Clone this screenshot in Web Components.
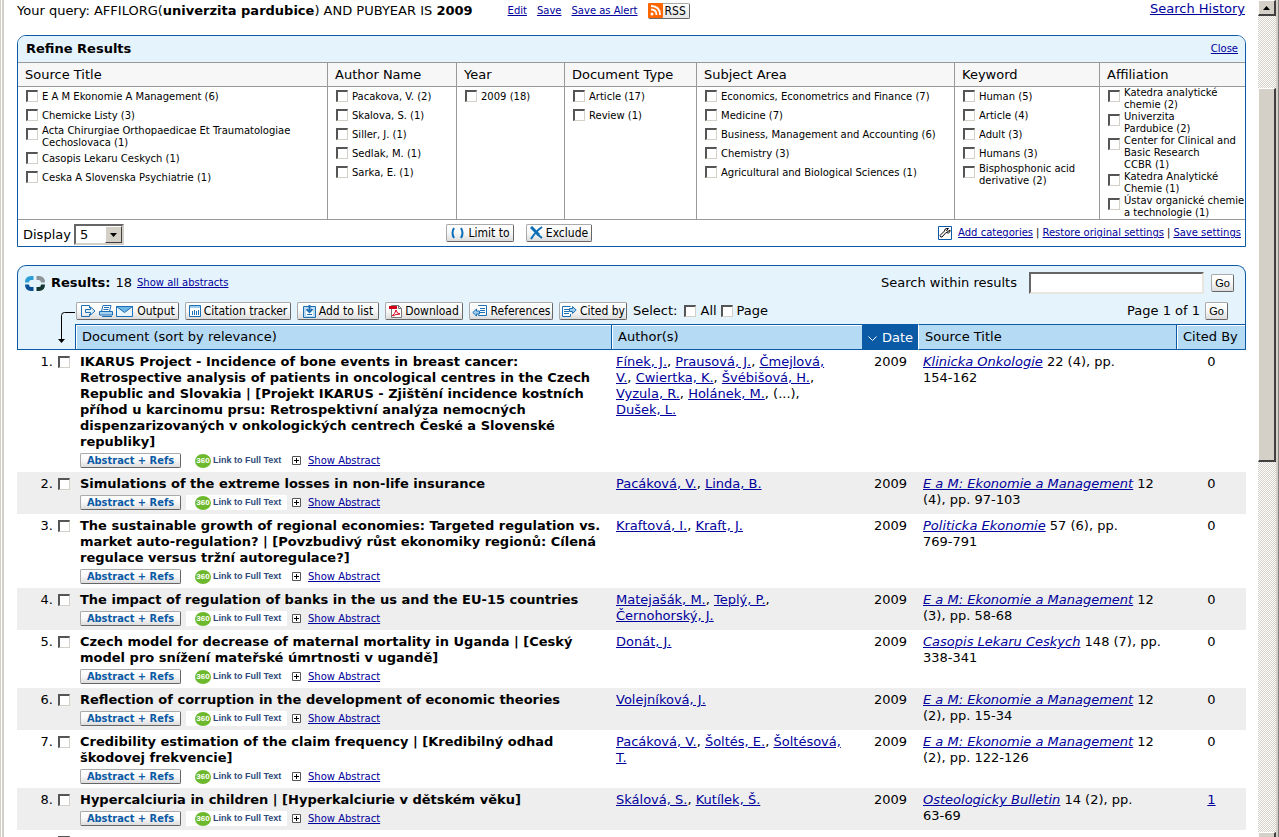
<!DOCTYPE html>
<html lang="en">
<head>
<meta charset="utf-8">
<title>Search results</title>
<style>
html, body { margin: 0; height: 100%; }
body { font: 13px/16px "DejaVu Sans", Verdana, sans-serif; color: #000; background: #fff; overflow: hidden; }
</style>
</head>
<body>
<app-window>
  <query-bar></query-bar>
  <refine-panel></refine-panel>
  <results-panel></results-panel>
</app-window>
<script>
const BASE = `
:host{display:block}
:host([hidden]){display:none}
*{box-sizing:border-box}
a{color:#00009c;text-decoration:underline}
.s{font-size:10px;line-height:12px}
input[type=checkbox]{appearance:none;margin:0;width:12px;height:12px;flex:none;background:#fff;border:2px solid;border-color:#555 #d4d0c8 #d4d0c8 #555;border-right-width:1px;border-bottom-width:1px;border-radius:0;display:block}
input[type=checkbox]:checked{background:#0a5aa5}
`;
function define(name, html, init) {
  const t = document.createElement('template');
  t.innerHTML = html;
  customElements.define(name, class extends HTMLElement {
    constructor() {
      super();
      this.attachShadow({ mode: 'open' }).append(t.content.cloneNode(true));
    }
    connectedCallback() { if (init && !this.ready) { this.ready = true; init(this, this.shadowRoot); } }
  });
}

const ICONS = {
  limit: `<svg width="15" height="14" viewBox="0 0 15 14" fill="none" stroke="#0a6db5" stroke-width="2"><path d="M4 2Q1 7 4 12M11 2q3 5 0 10"/></svg>`,
  exclude: `<svg width="13" height="14" viewBox="0 0 13 14" fill="none" stroke="#0a6db5"><path stroke-width="3" d="M1 1l8 8"/><path stroke-width="2" d="M7 8l5 4M12 1Q6 5 1 13"/></svg>`,
  output: `<svg width="54" height="14" viewBox="0 0 54 14" fill="none" stroke="#1f6fb5"><path d="M9.500 4V1.500H1.500v11H9.500V10" /><path fill="#dff0fb" d="M5.500 5.500h5v-2.500l4.500 4-4.500 4V8.500h-5z"/><path fill="#fff" d="M21.500 7.500l1.500-6h8l-1.500 6z"/><path fill="#a8d3f0" d="M19.500 7.500h13v3.500h-13z"/><path d="M22 12.500h10M24 3.500h5M23.500 5.500h5"/><path fill="#e8f5fd" d="M36.500 2.500h16v10h-16z"/><path fill="#6fb7e6" d="M36.500 2.500h16l-8 6z"/></svg>`,
  citation: `<svg width="12" height="12" viewBox="0 0 12 12" fill="none"><path fill="#fff" stroke="#1f6fb5" d="M.5.5h11v11H.5z"/><path fill="#9fcdec" d="M1 1h10v2H1z"/><path stroke="#1f6fb5" d="M3.500 6v4M5.500 5v5M7.500 6v4M9.500 5v5"/></svg>`,
  list: `<svg width="13" height="13" viewBox="0 0 13 13" fill="none" stroke="#1f6fb5"><path fill="#b9dcf3" d="M.5 1.500h12v11H.5z"/><path fill="#fff" stroke="none" d="M3 3h7v8H3z"/><path stroke-width="2" d="M6.500 0v6"/><path stroke-width="2" d="M3.500 4l3 3 3-3"/><path d="M4 9.500h5"/></svg>`,
  pdf: `<svg width="13" height="13" viewBox="0 0 13 13" fill="none"><path fill="#fff" stroke="#777" d="M2.500.5h7l3 3v9h-10z"/><path stroke="#777" d="M9.500.5v3h3"/><path fill="#d4001a" d="M0 1h8v3H0z"/><path stroke="#d4001a" d="M3 11q3-2 4-6 1 4 4 4-5 0-7 2"/></svg>`,
  refs: `<svg width="16" height="12" viewBox="0 0 16 12" fill="none" stroke="#1f6fb5"><path fill="#fff" d="M6.500 1V.5h8v10h-8v-1"/><path d="M8 3.500h5M8 5.500h5M8 7.500h5"/><path fill="#9fcdec" d="M7.500 6H4.500V4L.8 7.500l3.700 3.500V9h3z"/></svg>`,
  cited: `<svg width="16" height="13" viewBox="0 0 16 13" fill="none" stroke="#1f6fb5"><path fill="#fff" d="M9.500 9v2.500h-8V1.500h8"/><path d="M3 4.500h5M3 6.500h5M3 8.500h5"/><path fill="#9fcdec" d="M8.500 3.500h3v-2l3.700 3.500-3.700 3.500v-2h-3z"/></svg>`
};

define('app-window', `<style>${BASE}
:host{display:grid;grid-template-columns:4px minmax(0,1fr) 21px;height:100vh;overflow:hidden}
.edge{background:linear-gradient(90deg,#d4d0c8 1px,#fff 1px 2px,#d4d0c8 2px)}
main{padding:0 12px 0 13px;min-width:0;overflow:hidden}
</style><div class="edge"></div><main><slot></slot></main><scroll-rail></scroll-rail>`);

define('scroll-rail', `<style>${BASE}
:host{display:grid;grid-template-columns:18px 2px 1px;height:100vh;background:repeating-conic-gradient(#d4d0c8 0 25%,#fff 0 50%) 0 0/2px 2px}
.rail{display:flex;flex-direction:column;min-height:0}
.lite{background:#d4d0c8}.dark{background:#808080}
.b,.t{background:#d4d0c8;border:1px solid;border-color:#fff #404040 #404040 #fff;border-right-width:2px;border-bottom-width:2px}
.b{flex:none;height:16px;display:flex;align-items:center;justify-content:center}
.down{height:5px;border-bottom:0}
.t{flex:373 1 0}.g1{flex:72 1 0}.g2{flex:372 1 0}
</style><div class="rail"><div class="b"><svg width="7" height="4"><path d="M0 4L3.500 0 7 4z"/></svg></div><div class="g1"></div><div class="t"></div><div class="g2"></div><div class="b down"></div></div><div class="lite"></div><div class="dark"></div>`);

define('tool-button', `<style>${BASE}
:host{display:inline-block}
button{display:flex;align-items:center;justify-content:center;gap:3px;width:100%;height:18px;padding:0 2px;margin:0;font:12px/14px "DejaVu Sans Condensed","DejaVu Sans",sans-serif;color:#000;white-space:nowrap;
 background:linear-gradient(#fff,#f8f8f8 50%,#dcdcdc);border:1px solid;border-color:#aaa #666 #666 #aaa;border-radius:2px}
:host([kind=abs]) button{height:15px;padding:0;font-weight:bold;font-size:11px;line-height:13px;color:#0a5aa5}
:host([kind=go]) button{padding:0;font:11px/14px "Liberation Sans",sans-serif}
svg{display:block;flex:none}
</style><button type="button"><span id="i" hidden></span><slot></slot></button>`, (el, r) => {
  const i = el.getAttribute('icon');
  if (i) { const s = r.getElementById('i'); s.hidden = false; s.innerHTML = ICONS[i]; }
});

define('query-bar', `<style>${BASE}
:host{display:flex;align-items:flex-start;justify-content:space-between;height:34px;padding:1px 1px 0 0;white-space:nowrap}
.q{display:flex;align-items:center;gap:10px;height:19px}
.q>span{margin-right:25px}
.rss{display:flex;height:16px;padding:0;border:1px solid;border-color:#aaa #666 #666 #aaa;border-radius:2px;background:linear-gradient(#fff,#e4e4e4);font:12px/14px "DejaVu Sans Condensed","DejaVu Sans",sans-serif;color:#000}
.rss svg{margin:-1px 2px 0 -1px}.rss span{padding-right:3px}
</style>
<div class="q"><span>Your query: AFFILORG(<b>univerzita pardubice</b>) AND PUBYEAR IS <b>2009</b></span>
<a class="s" href="#">Edit</a><a class="s" href="#">Save</a><a class="s" href="#">Save as Alert</a>
<button class="rss" type="button"><svg width="15" height="15" viewBox="0 0 15 15"><rect width="15" height="15" rx="1" fill="#f60"/><circle cx="4" cy="11" r="1.500" fill="#fff"/><path d="M3 6.500Q8.500 6.500 8.500 12M3 3Q12 3 12 12" fill="none" stroke="#fff" stroke-width="1.800"/></svg><span>RSS</span></button></div>
<a href="#">Search History</a>`);

define('facet-column', `<style>${BASE}
:host{display:flex;flex-direction:column;min-width:0;border-right:1px solid #999}
:host(:last-child){border-right:0}
h3{margin:0;font:13px/23px "DejaVu Sans",sans-serif;height:24px;padding-left:7px;background:#f7f7f7;border-bottom:1px solid #999;white-space:nowrap}
ul{list-style:none;margin:0;padding:0 0 0 8px;height:132px}
label{display:flex;align-items:flex-start;gap:4px;min-height:19px;white-space:nowrap}
label input{margin-top:3px!important}
label span{align-self:center}
</style><h3></h3><ul></ul>`, (el, r) => {
  r.querySelector('h3').textContent = el.getAttribute('heading');
  r.querySelector('ul').innerHTML = el.getAttribute('items').split(';').map(t =>
    `<li><label class="s"><input type="checkbox"><span>${t.replaceAll('/', '<br>')}</span></label></li>`).join('');
});

define('refine-panel', `<style>${BASE}
:host{border:1px solid #0a5aa5;border-radius:9px 9px 0 0;overflow:hidden;margin-bottom:18px}
header{display:flex;justify-content:space-between;align-items:center;height:27px;padding:0 7px 0 8px;background:#e5f3fd;border-bottom:1px solid #999}
h2{margin:0;font-size:13px;line-height:16px}
.cols{display:grid;grid-template-columns:310fr 129fr 108fr 132fr 258fr 145fr 145fr;border-bottom:1px solid #999}
footer{display:grid;grid-template-columns:428fr 489fr 310fr;align-items:center;height:26px}
.d{display:flex;gap:3px;padding-left:5px;align-items:center}
.d label{padding-top:4px}
.sel{position:relative;display:flex}
select{appearance:none;width:50px;height:21px;margin:3px 0 0;padding:0 0 0 4px;font:13px/16px "DejaVu Sans",sans-serif;color:#000;background:#fff;border:2px solid;border-color:#666 #d4d0c8 #d4d0c8 #666;border-radius:0}
.arr{position:absolute;right:2px;top:5px;width:17px;height:17px;pointer-events:none;background:#d4d0c8;border:1px solid;border-color:#fff #404040 #404040 #fff;display:flex;align-items:center;justify-content:center}
.b{display:flex;gap:12px}
.l{display:flex;justify-content:flex-end;align-items:center;gap:3px;padding-right:4px;white-space:nowrap}
.l svg{margin-right:3px}
.lim{width:68px}.exc{width:66px}
</style>
<header><h2>Refine Results</h2><a class="s" href="#">Close</a></header>
<div class="cols">
<facet-column heading="Source Title" items="E A M Ekonomie A Management (6);Chemicke Listy (3);Acta Chirurgiae Orthopaedicae Et Traumatologiae/Cechoslovaca (1);Casopis Lekaru Ceskych (1);Ceska A Slovenska Psychiatrie (1)"></facet-column>
<facet-column heading="Author Name" items="Pacakova, V. (2);Skalova, S. (1);Siller, J. (1);Sedlak, M. (1);Sarka, E. (1)"></facet-column>
<facet-column heading="Year" items="2009 (18)"></facet-column>
<facet-column heading="Document Type" items="Article (17);Review (1)"></facet-column>
<facet-column heading="Subject Area" items="Economics, Econometrics and Finance (7);Medicine (7);Business, Management and Accounting (6);Chemistry (3);Agricultural and Biological Sciences (1)"></facet-column>
<facet-column heading="Keyword" items="Human (5);Article (4);Adult (3);Humans (3);Bisphosphonic acid/derivative (2)"></facet-column>
<facet-column heading="Affiliation" items="Katedra analytické/chemie (2);Univerzita/Pardubice (2);Center for Clinical and/Basic Research/CCBR (1);Katedra Analytické/Chemie (1);Ústav organické chemie/a technologie (1)"></facet-column>
</div>
<footer>
<div class="d"><label for="n">Display</label><span class="sel"><select id="n"><option>5</option><option>10</option></select><span class="arr"><svg width="7" height="4"><path d="M0 0h7L3.500 4z"/></svg></span></span></div>
<div class="b"><tool-button class="lim" icon="limit">Limit to</tool-button><tool-button class="exc" icon="exclude">Exclude</tool-button></div>
<div class="l s"><svg width="14" height="14" viewBox="0 0 14 14"><path fill="#fff" stroke="#0a5aa5" d="M.5.5h13v13H.5z"/><g fill="none" stroke="#000"><path d="M8 6.500L4 11q-1.500.5-2-1.500L6.500 5"/><path d="M6.500 5Q6.500 2.500 9 2.500M8 6.500l2.500.5q2-1 1.500-3L10 5.500 8.500 4.500 10.500 2.500H9"/></g></svg><a href="#">Add categories</a>|<a href="#">Restore original settings</a>|<a href="#">Save settings</a></div>
</footer>`);

define('results-panel', `<style>${BASE}
.head{position:relative;border:1px solid #0a5aa5;border-bottom:0;border-radius:9px 9px 0 0;background:#e5f3fd;height:59px;white-space:nowrap}
.r{display:flex;align-items:center;justify-content:space-between}
.r1{padding:6px 11px 0 7px}
.r2{padding:8px 17px 0 58px}
.g{display:flex;align-items:center}
.g1{gap:5px}.g1 svg{margin-right:1px}
.g2{gap:6px}
.sl{gap:4px}
.sl span{margin-right:3px}
.search{gap:7px}
.search label{margin-right:5px}
input[type=text]{width:175px;height:22px;margin:0;padding:0 3px;font:13px "DejaVu Sans",sans-serif;background:#fff;border:2px solid;border-color:#666 #e8e6e0 #e8e6e0 #666;border-radius:0}
.pg{gap:5px}
.go{width:23px}
.arrow{position:absolute;left:39px;top:45px;z-index:1}
.w1{width:103px}.w2{width:106px}.w3{width:82px}.w4{width:78px}.w5{width:84px}.w6{width:68px}
</style>
<div class="head">
<div class="r r1"><div class="g g1"><svg width="20" height="15" viewBox="0 0 20 15" fill="none" stroke-width="4"><path stroke="#2e9fd4" d="M8.500 2H6Q2 2 2 6.500"/><path stroke="#8b9499" d="M11.500 2H14q4 0 4 4.500"/><path stroke="#0a4f96" d="M2 8.500Q2 13 6 13h2.500"/><path stroke="#12352f" d="M18 8.500Q18 13 14 13h-2.500"/></svg><b>Results:</b><span>18</span><a class="s" href="#">Show all abstracts</a></div>
<div class="g search"><label for="q">Search within results</label><input type="text" id="q"><tool-button class="go" kind="go">Go</tool-button></div></div>
<div class="r r2"><div class="g g2"><tool-button class="w1" icon="output">Output</tool-button><tool-button class="w2" icon="citation">Citation tracker</tool-button><tool-button class="w3" icon="list">Add to list</tool-button><tool-button class="w4" icon="pdf">Download</tool-button><tool-button class="w5" icon="refs">References</tool-button><tool-button class="w6" icon="cited">Cited by</tool-button>
<div class="g sl"><span>Select:</span><input type="checkbox" id="all"><label for="all">All</label><input type="checkbox" id="page"><label for="page">Page</label></div></div>
<div class="g pg"><span>Page 1 of 1</span><tool-button class="go" kind="go">Go</tool-button></div></div>
<svg class="arrow" width="20" height="33" viewBox="0 0 20 33"><path fill="none" stroke="#000" d="M18 1.500H7.500q-3 0-3 3V29"/><path d="M1 28h7l-3.500 4z"/></svg>
</div>
<results-table></results-table>`);

define('full-text-link', `<style>${BASE}
:host{display:inline-block}
a{display:flex;align-items:center;gap:2px;width:101px;height:15px;padding-left:9px;background:#fff;text-decoration:none;color:#2f4a7a;font:bold 9px/15px "Liberation Sans",sans-serif;white-space:nowrap}
i{display:block;width:16px;height:14px;border-radius:50%;background:#6cb92d;color:#fff;font:bold 8px/14px "Liberation Sans",sans-serif;text-align:center}
</style><a href="#"><i>360</i><span>Link to Full Text</span></a>`);

const EM = 'E a M: Ekonomie a Management';
const ROWS = [
 ['IKARUS Project - Incidence of bone events in breast cancer:/Retrospective analysis of patients in oncological centres in the Czech/Republic and Slovakia | [Projekt IKARUS - Zjištění incidence kostních/příhod u karcinomu prsu: Retrospektivní analýza nemocných/dispenzarizovaných v onkologických centrech České a Slovenské/republiky]','[Fínek, J.], [Prausová, J.], [Čmejlová,/V.], [Cwiertka, K.], [Švébišová, H.],/[Vyzula, R.], [Holánek, M.], (...),/[Dušek, L.]','Klinicka Onkologie','22 (4), pp./154-162','0'],
 ['Simulations of the extreme losses in non-life insurance','[Pacáková, V.], [Linda, B.]',EM,'12/(4), pp. 97-103','0'],
 ['The sustainable growth of regional economies: Targeted regulation vs./market auto-regulation? | [Povzbudivý růst ekonomiky regionů: Cílená/regulace versus tržní autoregulace?]','[Kraftová, I.], [Kraft, J.]','Politicka Ekonomie','57 (6), pp./769-791','0'],
 ['The impact of regulation of banks in the us and the EU-15 countries','[Matejašák, M.], [Teplý, P.],/[Černohorský, J.]',EM,'12/(3), pp. 58-68','0'],
 ['Czech model for decrease of maternal mortality in Uganda | [Ceský/model pro snížení mateřské úmrtnosti v ugandě]','[Donát, J.]','Casopis Lekaru Ceskych','148 (7), pp./338-341','0'],
 ['Reflection of corruption in the development of economic theories','[Volejníková, J.]',EM,'12/(2), pp. 15-34','0'],
 ['Credibility estimation of the claim frequency | [Kredibilný odhad/škodovej frekvencie]','[Pacáková, V.], [Šoltés, E.], [Šoltésová,/T.]',EM,'12/(2), pp. 122-126','0'],
 ['Hypercalciuria in children | [Hyperkalciurie v dětském věku]','[Skálová, S.], [Kutílek, Š.]','Osteologicky Bulletin','14 (2), pp./63-69','<a href="#">1</a>']
];
const br = s => s.replaceAll('/', '<br>');
define('results-table', `<style>${BASE}
table{width:100%;table-layout:fixed;border-collapse:separate;border-spacing:0}
.c0{width:58px}.c2{width:251px}.c3{width:56px}.c4{width:258px}.c5{width:70px}
th{height:26px;padding:0 4px 0 6px;font-weight:normal;text-align:left;line-height:22px;white-space:nowrap;background:#b5daf4;border:solid #0a5aa5;border-width:1px 0 1px 1px;box-shadow:inset 1px 1px #fff}
th:first-child{background:#e5f3fd;border-top:0;box-shadow:none}
th:last-child{border-right-width:1px}
th.on{background:#0a5aa5;color:#fff;box-shadow:none;padding:2px 0 0 5px}
th.on+th{border-left-color:#fff;box-shadow:none}
th.on svg{margin-right:5px}
td{vertical-align:top;padding:4px 4px 0 5px;white-space:nowrap}
tr:nth-child(even) td{background:#eee}
td.c{text-align:center}
.n{display:flex;justify-content:flex-end;gap:5px;padding-right:1px}
.n input{margin-top:2px!important}
.a{display:flex;align-items:center;height:15px;margin:3px 0 4px}
.a tool-button{width:101px;margin-right:5px}
.a svg{margin:0 7px 0 5px}
</style>
<table><colgroup><col class="c0"><col><col class="c2"><col class="c3"><col class="c4"><col class="c5"></colgroup>
<thead><tr><th></th><th>Document (sort by relevance)</th><th>Author(s)</th><th class="on"><svg width="9" height="6" viewBox="0 0 9 6"><path d="M.5.5l4 4 4-4" fill="none" stroke="#fff"/></svg>Date</th><th>Source Title</th><th>Cited By</th></tr></thead>
<tbody></tbody></table>`, (el, r) => {
  r.querySelector('tbody').innerHTML = ROWS.map(([t, au, s, v, c], i) => `<tr>
<td><div class="n"><span>${i + 1}.</span><input type="checkbox" aria-label="Select result ${i + 1}"></div></td>
<td><b>${br(t)}</b><div class="a"><tool-button kind="abs">Abstract + Refs</tool-button><full-text-link></full-text-link><svg width="9" height="9"><path d="M.5.5h8v8h-8z" fill="#fff" stroke="#555"/><path d="M2 4.500h5M4.500 2v5" stroke="#000"/></svg><a class="s" href="#">Show Abstract</a></div></td>
<td>${br(au).replace(/\[(.*?)\]/g, '<a href="#">$1</a>')}</td><td class="c">2009</td>
<td><a href="#"><em>${s}</em></a> ${br(v)}</td><td class="c">${c}</td></tr>`).join('') +
  `<tr><td><div class="n"><input type="checkbox" aria-label="Select result 9"></div></td><td></td><td></td><td></td><td></td><td></td></tr>`;
});
</script>
</body>
</html>
